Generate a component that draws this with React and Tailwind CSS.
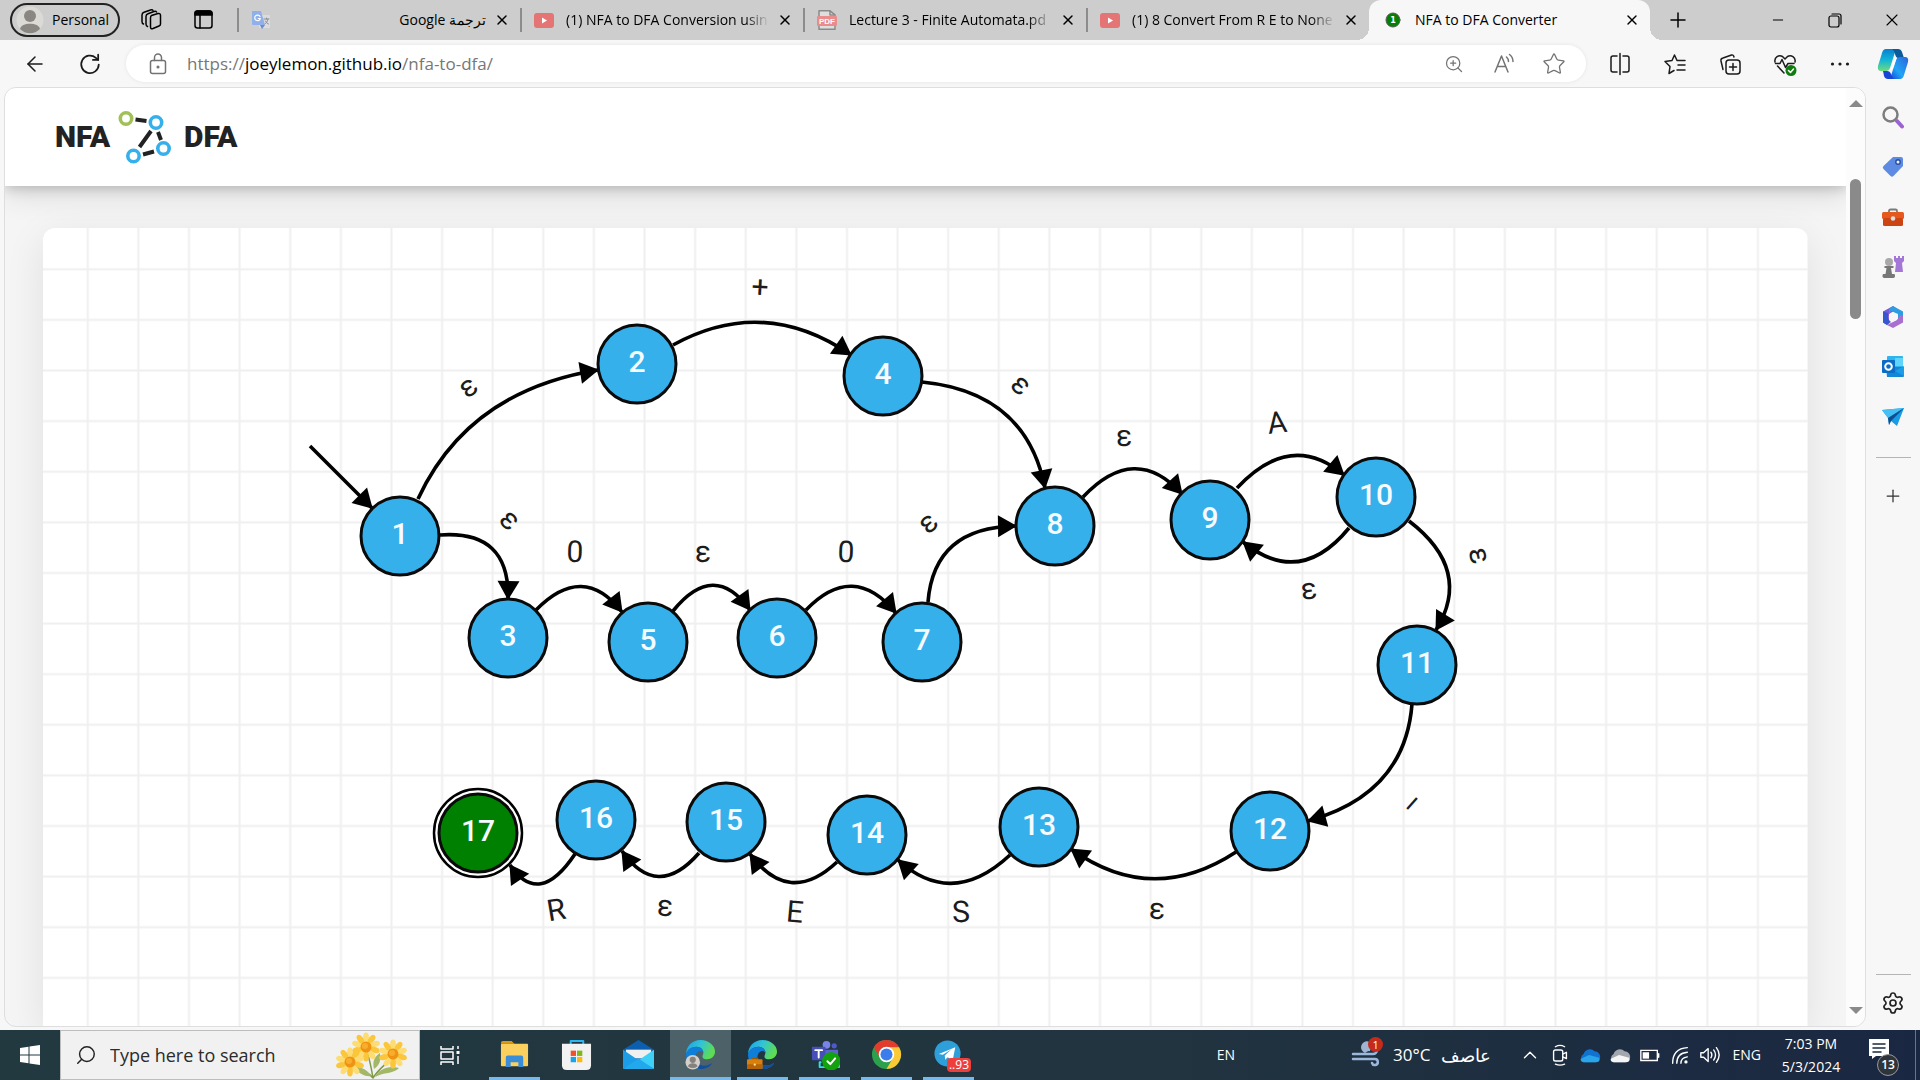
import React from "react";
import {
  ArrowLeft,
  Lock,
  ZoomIn,
  Star,
  X,
  Plus,
  Minus,
  Search,
  Settings,
  ChevronUp,
} from "lucide-react";

const NODES = [
  { id: 1, x: 400, y: 536 },
  { id: 2, x: 637, y: 364 },
  { id: 3, x: 508, y: 638 },
  { id: 4, x: 883, y: 376 },
  { id: 5, x: 648, y: 642 },
  { id: 6, x: 777, y: 638 },
  { id: 7, x: 922, y: 642 },
  { id: 8, x: 1055, y: 526 },
  { id: 9, x: 1210, y: 520 },
  { id: 10, x: 1376, y: 497 },
  { id: 11, x: 1417, y: 665 },
  { id: 12, x: 1270, y: 831 },
  { id: 13, x: 1039, y: 827 },
  { id: 14, x: 867, y: 835 },
  { id: 15, x: 726, y: 822 },
  { id: 16, x: 596, y: 820 },
  { id: 17, x: 478, y: 833, accept: true },
];

/* from, control and to points of each curve, then its label and the label's centre */
const EDGES = [
  { from: [418, 499], ctrl: [468, 391], to: [598, 370], label: "ε", at: [469, 388] },
  { from: [673, 345], ctrl: [764, 295], to: [851, 355], label: "+", at: [760, 287] },
  { from: [922, 382], ctrl: [1026, 392], to: [1045, 488], label: "ε", at: [1020, 386] },
  { from: [440, 535], ctrl: [510, 530], to: [508, 599], label: "ε", at: [509, 521] },
  { from: [536, 610], ctrl: [583, 562], to: [622, 612], label: "0", at: [575, 551] },
  { from: [673, 611], ctrl: [714, 560], to: [750, 610], label: "ε", at: [703, 554] },
  { from: [806, 610], ctrl: [853, 561], to: [896, 613], label: "0", at: [846, 551] },
  { from: [928, 602], ctrl: [934, 527], to: [1016, 526], label: "ε", at: [929, 524] },
  { from: [1083, 497], ctrl: [1135, 442], to: [1182, 494], label: "ε", at: [1124, 438] },
  { from: [1237, 488], ctrl: [1291, 430], to: [1344, 475], label: "A", at: [1277, 422] },
  { from: [1349, 528], ctrl: [1300, 588], to: [1243, 542], label: "ε", at: [1309, 591] },
  { from: [1409, 521], ctrl: [1473, 570], to: [1436, 630], label: "ε", at: [1478, 556] },
  { from: [1412, 704], ctrl: [1405, 794], to: [1308, 821], label: "–", at: [1414, 805] },
  { from: [1236, 852], ctrl: [1152, 907], to: [1071, 849], label: "ε", at: [1157, 911] },
  { from: [1010, 855], ctrl: [952, 909], to: [898, 860], label: "S", at: [961, 911] },
  { from: [837, 862], ctrl: [789, 907], to: [750, 854], label: "E", at: [795, 911] },
  { from: [699, 853], ctrl: [657, 901], to: [622, 851], label: "ε", at: [665, 908] },
  { from: [575, 854], ctrl: [539, 908], to: [510, 865], label: "R", at: [556, 909] },
];

const LABEL_DROP = { "ε": 8, "+": 10, "–": 8 };

function Arrow({ from, ctrl, to }) {
  const angle = (Math.atan2(to[1] - ctrl[1], to[0] - ctrl[0]) * 180) / Math.PI;
  const d = `M${from[0]} ${from[1]} Q${ctrl[0]} ${ctrl[1]} ${to[0]} ${to[1]}`;
  return (
    <g>
      <path d={d} fill="none" stroke="#000" strokeWidth="3.600" strokeDasharray="none" />
      <path d="M1 0 L-18 -11 L-18 11 Z" transform={`translate(${to[0]} ${to[1]}) rotate(${angle})`} />
    </g>
  );
}

function Automaton() {
  return (
    <svg viewBox="43 228 1765 799" preserveAspectRatio="xMinYMin slice" className="block h-full w-full" role="img" aria-label="Automaton with 17 states">
      <defs>
        <pattern id="grid" x="62.5" y="244" width="50.61" height="50.61" patternUnits="userSpaceOnUse">
          <path d="M25.3 0V51M0 25.3H51" stroke="#efefef" strokeWidth="2" />
        </pattern>
      </defs>
      <rect x="43" y="228" width="1765" height="799" fill="url(#grid)" />
      <Arrow from={[310, 446]} ctrl={[341, 477]} to={[372, 508]} />
      {EDGES.map((e, i) => (
        <Arrow key={i} {...e} />
      ))}
      {EDGES.map((e, i) => {
        const tilt = (Math.atan((e.to[1] - e.from[1]) / (e.to[0] - e.from[0])) * 180) / Math.PI;
        return (
          <g key={i} transform={`translate(${e.at[0]} ${e.at[1]}) rotate(${tilt})`}>
            <text y={LABEL_DROP[e.label] ?? 11} textAnchor="middle" className="fill-[#1c1c1c] font-['Roboto',sans-serif] text-[30px]">
              {e.label}
            </text>
          </g>
        );
      })}
      {NODES.map((n) => (
        <g key={n.id}>
          {n.accept && <circle cx={n.x} cy={n.y} r="44" fill="#fff" stroke="#000" strokeWidth="2.500" />}
          <circle cx={n.x} cy={n.y} r="39" fill={n.accept ? "#008000" : "#36b0eb"} stroke="#0a0a0a" strokeWidth="3" />
          <text x={n.x} y={n.y + 8} textAnchor="middle" className="fill-[#f5fbff] font-['Roboto',sans-serif] text-[30px] font-medium">
            {n.id}
          </text>
        </g>
      ))}
    </svg>
  );
}

function Svg({ className = "size-6", box = "0 0 24 24", children }) {
  return (
    <svg viewBox={box} className={className} fill="none" stroke="currentColor" strokeWidth="1.5" strokeLinecap="round" strokeLinejoin="round" aria-hidden="true">
      {children}
    </svg>
  );
}

const YouTube = () => (
  <Svg className="h-4 w-5 shrink-0" box="0 0 20 16">
    <rect width="20" height="15" y="1" rx="3" fill="#e57575" stroke="none" />
    <path d="M8 5.5v6l5-3z" fill="#fff" stroke="none" />
  </Svg>
);
const Pdf = () => (
  <Svg className="h-5 w-5 shrink-0" box="0 0 20 20">
    <path d="M2 .8h11l5 4V19.200H2z" fill="#dedede" stroke="#8a8a8a" />
    <path d="M13 1v4h4" stroke="#8a8a8a" />
    <rect y="6" width="20" height="10" rx="1" fill="#e88c8c" stroke="none" />
    <text x="10" y="14" textAnchor="middle" className="fill-white stroke-none font-['Liberation_Sans',sans-serif] text-[8px] font-bold">PDF</text>
  </Svg>
);
const Translate = () => (
  <Svg className="h-5 w-5 shrink-0" box="0 0 20 20">
    <rect x="8" y="5" width="11" height="13" rx="1" fill="#dcdcdc" stroke="none" />
    <path d="M1 1h9l4 14H2a1 1 0 0 1-1-1z" fill="#8fb0ea" stroke="none" />
    <path d="M9 15h5l-3 4z" fill="#7187d4" stroke="none" />
    <path d="M9 6.500A2.800 2.800 0 1 0 9.300 8.500H7.200" stroke="#fff" strokeWidth="1.200" />
    <path d="M13 9h5M15.500 8v1M17 9c-.5 3-2 4-3 5M14.500 11c1 2 2 2.500 3 3" stroke="#8a8f96" strokeWidth="1" />
  </Svg>
);
const StateDot = () => (
  <Svg className="h-5 w-5 shrink-0" box="0 0 20 20">
    <circle cx="10" cy="10" r="7" fill="#058005" stroke="#5a5a5a" strokeWidth="1" />
    <text x="10" y="13" textAnchor="middle" className="fill-white stroke-none font-['DejaVu_Sans',sans-serif] text-[8px] font-bold">1</text>
  </Svg>
);

const TABS = [
  { title: "ترجمة Google", Icon: Translate, rtl: true },
  { title: "(1) NFA to DFA Conversion usin", Icon: YouTube },
  { title: "Lecture 3 - Finite Automata.pd", Icon: Pdf },
  { title: "(1) 8 Convert From R E to None", Icon: YouTube },
];

function Tab({ title, Icon, rtl }) {
  return (
    <div className="flex h-10 min-w-0 flex-[0_1_283px] items-center">
      <span className="h-6 w-0.5 shrink-0 bg-[#8c8c8c]" />
      <button className="flex min-w-0 flex-1 items-center gap-3 pl-3 text-sm">
        <Icon />
        <span dir={rtl ? "rtl" : "ltr"} className={"min-w-0 flex-1 overflow-hidden whitespace-nowrap text-start " + (rtl ? "" : "[mask-image:linear-gradient(to_right,#000_88%,transparent)]")}>
          {title}
        </span>
      </button>
      <button aria-label={"Close " + title} className="mr-2.5 ml-2 shrink-0">
        <X className="size-4" strokeWidth={2.2} />
      </button>
    </div>
  );
}

function TabStrip() {
  return (
    <header className="flex h-10 bg-[#cdcdcd] text-black">
      <div className="flex w-[237px] shrink-0 items-center pl-2.5">
        <button className="flex h-[34px] w-[110px] items-center gap-2 rounded-full border-2 border-[#222] pl-1 text-sm">
          <Svg className="size-7" box="0 0 28 28">
            <circle cx="14" cy="14" r="13.500" fill="#dcdad6" stroke="none" />
            <circle cx="14" cy="10" r="6" fill="#8a8783" stroke="none" />
            <path d="M4 23c1-7 19-7 20 0a14 14 0 0 1-20 0z" fill="#8a8783" stroke="none" />
          </Svg>
          Personal
        </button>
        <button aria-label="Workspaces" className="ml-[19px]">
          <Svg className="size-6">
            <path d="M12.500 7.500l6.500-2q2.500-.5 2.500 2v8.500q0 1.500-1.500 2l-6 2.500q-2.500.8-2.500-1.500V10q0-2 1-2.500z" />
            <path d="M8.500 18.500C7 18 7 17 7 16V8.500q0-2 2-2.700L15 3.500q2-.5 2.500.5" />
            <path d="M4.500 16C3 15.500 3 14.500 3 13.500V7q0-2 2-2.700L11.500 2q2-.5 2.500.5" />
          </Svg>
        </button>
        <button aria-label="Tab actions" className="ml-7">
          <Svg className="size-6">
            <rect x="4" y="3" width="17" height="17" rx="2.500" />
            <path d="M4 7V5.500A2.500 2.500 0 0 1 6.500 3h12A2.500 2.500 0 0 1 21 5.500V7z" fill="currentColor" />
            <path d="M9 7v13" />
          </Svg>
        </button>
      </div>
      {TABS.map((t) => (
        <Tab key={t.title} {...t} />
      ))}
      <div className="relative flex min-w-0 flex-[0_1_281px] items-center rounded-t-xl bg-[#f7f7f7]">
        <span className="absolute bottom-0 -left-3 size-3 bg-[radial-gradient(circle_at_top_left,transparent_12px,#f7f7f7_12px)]" />
        <span className="absolute -right-3 bottom-0 size-3 bg-[radial-gradient(circle_at_top_right,transparent_12px,#f7f7f7_12px)]" />
        <button className="flex min-w-0 flex-1 items-center gap-3 pl-3.5 text-sm">
          <StateDot />
          NFA to DFA Converter
        </button>
        <button aria-label="Close NFA to DFA Converter" className="mr-2.5">
          <X className="size-4" strokeWidth={2} />
        </button>
      </div>
      <button aria-label="New tab" className="ml-4">
        <Plus className="size-6" strokeWidth={1.5} />
      </button>
      <div className="ml-auto flex">
        <button aria-label="Minimize" className="grid w-[57px] place-items-center"><Minus className="size-4" strokeWidth={1.5} /></button>
        <button aria-label="Restore" className="grid w-[57px] place-items-center">
          <Svg className="size-4" box="0 0 16 16">
            <rect x="2" y="4" width="10" height="11" rx="2" strokeWidth="1.200" />
            <path d="M5 2h7q2 0 2 2v8" strokeWidth="1.200" />
          </Svg>
        </button>
        <button aria-label="Close window" className="grid w-[57px] place-items-center"><X className="size-5" strokeWidth={1.3} /></button>
      </div>
    </header>
  );
}

function Toolbar() {
  return (
    <nav className="flex h-[47px] items-center pl-[19px] text-[#1b1b1b]">
      <button aria-label="Back" className="grid size-8 place-items-center"><ArrowLeft className="size-6" strokeWidth={1.5} /></button>
      <button aria-label="Refresh" className="ml-[23px] grid size-8 place-items-center">
        <Svg className="size-7">
          <path d="M19.500 12.500A7.500 7.500 0 1 1 17 6.700L19 8.500" />
          <path d="M19 4v4.500h-4.500" />
        </Svg>
      </button>
      <div className="ml-5 flex h-[37px] min-w-0 flex-1 items-center rounded-full bg-white pr-5 pl-5 text-[#737373] shadow-[0_0_4px_rgba(0,0,0,0.08)]">
        <Svg className="size-6">
          <rect x="4.500" y="8.500" width="15" height="13" rx="2" />
          <path d="M8.500 8.500V5.500a3.500 3.500 0 0 1 7 0v3" />
          <circle cx="12" cy="15" r=".8" fill="currentColor" />
        </Svg>
        <a href="https://joeylemon.github.io/nfa-to-dfa/" className="ml-[17px] text-[17px] leading-6 text-[#777]">
          https://<span className="text-black">joeylemon.github.io</span>/nfa-to-dfa/
        </a>
        <div className="ml-auto flex items-center gap-[26px]">
          <button aria-label="Zoom" className="mr-0.5"><ZoomIn className="size-5" strokeWidth={1.5} /></button>
          <button aria-label="Read aloud">
            <Svg className="size-6">
              <path d="M3 20L9.500 4 16 20M5.500 14.500h8" />
              <path d="M14.500 5a6 6 0 0 1 2 4.500M17.500 2.500a9 9 0 0 1 3.500 7" />
            </Svg>
          </button>
          <button aria-label="Add to favorites"><Star className="size-6" strokeWidth={1.3} /></button>
        </div>
      </div>
      <div className="flex items-center gap-[31px] pl-[22px]">
        <button aria-label="Split screen">
          <Svg>
            <path d="M9 4H5a2 2 0 0 0-2 2v12a2 2 0 0 0 2 2h4M15 4h4a2 2 0 0 1 2 2v12a2 2 0 0 1-2 2h-4M12 1.500v21" />
          </Svg>
        </button>
        <button aria-label="Favorites">
          <Svg>
            <path d="M14 8.500L11.500 3 9 8.500l-7 1 5 5L6 21.500l5-3M14 8.500h8M15 13h7M14 18h8" />
          </Svg>
        </button>
        <button aria-label="Collections">
          <Svg>
            <rect x="8" y="8" width="14" height="14" rx="3" />
            <path d="M15 11.500v7M11.500 15h7M5 17.500l-2-8.500q-.5-2.500 2-3l8.500-3q2-.5 2.500 2" />
          </Svg>
        </button>
        <button aria-label="Browser essentials">
          <Svg>
            <path d="M2 10C1 5 6 2.500 9.500 4.500L12 7l2.500-2.500C18 2.500 23 5 22 10M4.500 14L11 21M2.500 11.500H7l2-4 3.500 8 2.500-4h6" />
            <circle cx="18" cy="18.500" r="5.500" fill="#107c10" stroke="none" />
            <path d="M15.500 18.500l2 2 3-3.500" stroke="#fff" />
          </Svg>
        </button>
        <button aria-label="Settings and more">
          <Svg>
            <g fill="currentColor" stroke="none">
              <circle cx="4.500" cy="12" r="1.600" />
              <circle cx="12" cy="12" r="1.600" />
              <circle cx="19.500" cy="12" r="1.600" />
            </g>
          </Svg>
        </button>
      </div>
      <button aria-label="Copilot" className="grid w-[68px] place-items-center pl-3.5">
        <Svg className="size-8" box="0 0 32 32">
          <defs>
            <linearGradient id="cpA" x1="0" y1="0" x2="0" y2="1"><stop stopColor="#0a7fd0" /><stop offset=".5" stopColor="#12b5d8" /><stop offset="1" stopColor="#6fdb7c" /></linearGradient>
            <linearGradient id="cpB" x1="0" y1="1" x2="1" y2="0"><stop stopColor="#1746d8" /><stop offset=".4" stopColor="#1fa6f5" /><stop offset="1" stopColor="#2f62dc" /></linearGradient>
          </defs>
          <g stroke="none">
            <path d="M9 1h10l-6 19q-1 3-4 3H4q-4 0-3-5L5 5q1-4 4-4z" fill="url(#cpA)" />
            <path d="M15 1h6q3 0 4 3l2 6h-6q-2 0-3-4-1-4-3-5z" fill="#0b5a9c" />
            <path d="M23 31H13l6-19q1-3 4-3h5q4 0 3 5l-4 13q-1 4-4 4z" fill="url(#cpB)" />
            <path d="M17 31h-6q-3 0-4-3l-1-5h4q3 0 4 3 1 4 3 5z" fill="#1746d8" />
            <path d="M13 22l4-11q1-2 3-2h-2q2 0 1 3l-3 8q-1 2-3 2z" fill="#fff" />
          </g>
        </Svg>
      </button>
    </nav>
  );
}

function Logo() {
  return (
    <a href="#top" aria-label="NFA to DFA" className="flex items-center gap-2 font-['Roboto','Liberation_Sans',sans-serif] text-[30px] leading-none font-black text-[#222]">
      NFA
      <svg viewBox="0 0 54 54" className="size-[54px]" fill="none" strokeWidth="4" aria-hidden="true">
        <path d="M17.500 9.500l11 1.500M33 21L21.500 37M40 22l3 8M25 44.500l11-3" stroke="#222" />
        <g stroke="#36b0eb" strokeWidth="3.600">
          <circle cx="38" cy="12.500" r="5.700" />
          <circle cx="45.500" cy="38.500" r="5.700" />
          <circle cx="15.500" cy="46" r="5.700" />
        </g>
        <circle cx="8" cy="8.500" r="5.700" stroke="#a1c057" strokeWidth="3.600" />
      </svg>
      <span className="ml-1">DFA</span>
    </a>
  );
}

const SIDE = [
  ["Search", (
    <g>
      <circle cx="9.500" cy="9.500" r="7" stroke="#7d7d7d" strokeWidth="2.500" />
      <path d="M16 16l5 5.500" stroke="#9a63cf" strokeWidth="4" />
    </g>
  )],
  ["Shopping", (
    <g stroke="none">
      <path d="M12 2h8q2 0 2 2v7L12.500 21q-1.500 1.500-3 0L2.500 14q-1.500-1.500 0-3z" fill="#5d8be3" />
      <circle cx="17" cy="7" r="2.200" fill="#e8f0ff" stroke="#2c4d9c" strokeWidth="1.400" />
    </g>
  )],
  ["Tools", (
    <g stroke="none">
      <path d="M8 8V6q0-1.500 1.500-1.500h5Q16 4.500 16 6v2" stroke="#7a7a7a" strokeWidth="1.800" />
      <rect x="1" y="7" width="22" height="7" rx="1.500" fill="#e5591c" />
      <rect x="2" y="13" width="20" height="8" rx="1.500" fill="#cc4411" />
      <circle cx="12" cy="13.500" r="2.300" fill="#dedede" />
    </g>
  )],
  ["Games", (
    <g stroke="none">
      <path d="M13 1h2v2h2V1h2v2h2V1h2v5l-2 2 1 9h-8l1-9-2-2z" fill="#a277d6" />
      <circle cx="8" cy="7" r="4" fill="#a8a8a8" />
      <path d="M3.500 11h9v2H10l1 6h2.500q1.500 3-1 4H3q-2.500-1-1-4h2.500l1-6h-2z" fill="#777" />
    </g>
  )],
  ["Microsoft 365", (
    <g stroke="none">
      <path d="M12 1L2 6.500v11l4 2.500 4-3-2-2V9l8-5z" fill="#7c5cd6" />
      <path d="M12 1l10 5.500V17l-5-2V9l-7-3-2 3V4z" fill="#2f9be0" />
      <path d="M22 13v4.500L12 23l-6-3 10-5 3-5 3 1z" fill="#a86fd0" />
      <path d="M2 6.500v11l4 2.500 3-3-2-3V8z" fill="#3558cf" />
      <circle cx="12" cy="12" r="4.200" fill="#f7f7f7" />
    </g>
  )],
  ["Outlook", (
    <g stroke="none">
      <rect x="6" y="1" width="16" height="14" rx="1" fill="#2fb4ee" />
      <rect x="14" y="3" width="8" height="8" fill="#5fd5fb" />
      <path d="M5 12h18v9q0 1-1 1H6z" fill="#1287d6" />
      <path d="M23 11v10L14 16z" fill="#1b9de8" />
      <rect x="1" y="5" width="13" height="13" rx="1" fill="#0a6cc4" />
      <circle cx="7.500" cy="11.500" r="3.300" stroke="#fff" strokeWidth="2" />
    </g>
  )],
  ["Drop", (
    <g stroke="none">
      <path d="M1 5l22-2-7 18-6-5-2 4-1-7z" fill="#1a9be6" />
      <path d="M1 5l22-2L7 13z" fill="#45c0f5" />
      <path d="M7 13L23 3 10 16l-2 4z" fill="#0f4f8f" />
    </g>
  )],
];

function Sidebar() {
  return (
    <aside className="flex w-[54px] shrink-0 flex-col items-center pt-[18px] pb-3">
      <div className="flex flex-col gap-[26px]">
        {SIDE.map(([name, art]) => (
          <button key={name} aria-label={name}><Svg className="size-6">{art}</Svg></button>
        ))}
      </div>
      <span className="mt-7 h-px w-[35px] bg-[#b5b5b5]" />
      <button aria-label="Customize" className="mt-7 text-[#333]"><Plus className="size-5" strokeWidth={1.5} /></button>
      <span className="mt-auto h-px w-[35px] bg-[#b5b5b5]" />
      <button aria-label="Sidebar settings" className="mt-4 text-[#222]"><Settings className="size-6" strokeWidth={1.7} /></button>
    </aside>
  );
}

function Page() {
  return (
    <div className="flex min-w-0 flex-1 overflow-hidden rounded-xl border border-[#dedede] bg-[#f5f5f5]">
      <div className="flex min-w-0 flex-1 flex-col overflow-hidden">
        <div className="relative z-10 flex h-[98px] shrink-0 items-center bg-white pl-[50px] shadow-[0_8px_28px_rgba(0,0,0,0.12),0_2px_12px_rgba(0,0,0,0.2)]">
          <Logo />
        </div>
        <main className="min-h-0 flex-1 pt-[42px] pr-[38px] pl-[38px]">
          <div className="h-full overflow-hidden rounded-t-xl bg-white shadow-[0_10px_40px_rgba(0,0,0,0.09)]">
            <Automaton />
          </div>
        </main>
      </div>
      <div className="flex w-[19px] shrink-0 flex-col items-center bg-[#fcfcfc] pt-3 pb-3">
        <Svg className="h-[7px] w-3.5" box="0 0 14 7"><path d="M7 0l7 7H0z" fill="#8a8a8a" stroke="none" /></Svg>
        <span className="mt-[72px] h-[140px] w-[11px] rounded-full bg-[#8a8a8a]" />
        <Svg className="mt-auto h-[7px] w-3.5" box="0 0 14 7"><path d="M7 7l7-7H0z" fill="#8a8a8a" stroke="none" /></Svg>
      </div>
    </div>
  );
}

const PETALS = [0, 36, 72, 108, 144, 180, 216, 252, 288, 324];
function Daisy({ x, y }) {
  return (
    <g transform={`translate(${x} ${y})`} stroke="none">
      {PETALS.map((a) => (
        <ellipse key={a} cx="0" cy="-9.500" rx="2.900" ry="5" fill={a % 72 ? "#fbc63a" : "#fddc74"} transform={`rotate(${a})`} />
      ))}
      <circle r="5.500" fill="#ee9412" />
      <circle r="3" cx="-1" cy="-1" fill="#f8ae2c" />
    </g>
  );
}

function EdgeArt() {
  return (
    <g stroke="none">
      <path d="M16 1c9 0 15 6 15 12 0 5-4 8-8 8-3 0-5-1-5-3 0-1 1-2 1-4 0-3-3-6-7-6-6 0-10 4-11 8C1 8 7 1 16 1z" fill="url(#edgeTop)" />
      <path d="M1 16c1-5 5-8 11-8 4 0 7 3 7 6-2-3-7-2-8 3-1 7 5 12 12 10 2-.5 4-2 5-2-2 4-7 6-12 6C7 31 1 24 1 16z" fill="#0f7ed8" />
      <path d="M11 17c-1 7 5 12 12 10 2-.5 4-2 5-2-2 4-7 6-12 6-6-1-9-8-5-14z" fill="#174d96" />
    </g>
  );
}

const APPS = [
  { name: "File Explorer", state: "open", art: (
    <g stroke="none">
      <path d="M2 4q0-2 2-2h9l3 3H2z" fill="#d99a12" />
      <rect x="2" y="5" width="28" height="23" rx="1" fill="#fcd05e" />
      <path d="M7 29V19q0-2 2-2h14q2 0 2 2v10h-5v-5h-8v5z" fill="#3a8ed8" />
    </g>
  ) },
  { name: "Microsoft Store", state: "", art: (
    <g stroke="none">
      <path d="M10 7V2h13v5" stroke="#2cb7f1" strokeWidth="2" />
      <path d="M1 5h30v22q0 5-5 5H6q-5 0-5-5z" fill="#f2f2f2" />
      <path d="M10 12h5.500v5.500H10z" fill="#f0502a" />
      <path d="M16.500 12H22v5.500h-5.500z" fill="#80b81a" />
      <path d="M10 18.500h5.500V24H10z" fill="#16a4ee" />
      <path d="M16.500 18.500H22V24h-5.500z" fill="#fcb90e" />
    </g>
  ) },
  { name: "Mail", state: "", art: (
    <g stroke="none">
      <path d="M0 11L16 1l16 10v19H0z" fill="#0b5fae" />
      <path d="M3 11h26v9H3z" fill="#f0f0f0" />
      <path d="M0 11l16 11-16 9z" fill="#1c9de8" />
      <path d="M32 11L16 22l16 9z" fill="#3fd0f8" />
      <path d="M0 31l16-11 16 11z" fill="#22a8ec" />
    </g>
  ) },
  { name: "Edge Personal", state: "active", art: (
    <g>
      <EdgeArt />
      <g stroke="none">
        <circle cx="8" cy="24" r="7.500" fill="#d3d0cc" />
        <circle cx="8" cy="21.500" r="3.200" fill="#85827e" />
        <path d="M3 28c1-4 9-4 10 0q-5 4-10 0z" fill="#85827e" />
      </g>
    </g>
  ) },
  { name: "Edge Work", state: "open", art: (
    <g>
      <EdgeArt />
      <g stroke="none">
        <path d="M5 22v-2h6v2" stroke="#9a5a05" strokeWidth="1.500" />
        <rect y="21" width="16" height="10" rx="1" fill="#d97f0c" />
        <rect y="26" width="16" height="5" rx="1" fill="#b5640a" />
        <circle cx="8" cy="26.500" r="1.200" fill="#ffe28a" />
      </g>
    </g>
  ) },
  { name: "Teams", state: "open", art: (
    <g stroke="none">
      <circle cx="18" cy="6" r="4" fill="#7b83eb" />
      <circle cx="26" cy="7" r="2.700" fill="#5059c9" />
      <path d="M12 11h18v8q-2 7-9 7-8 0-9-7z" fill="#5b62cf" />
      <path d="M12 24h-1v5h20v-4" stroke="#2ce0e0" strokeWidth="2" />
      <rect x="3" y="8" width="14" height="14" rx="1" fill="#464eb8" />
      <path d="M6.500 11.500h7M10 11.500V19" stroke="#fff" strokeWidth="2" />
      <circle cx="23" cy="23" r="9.500" fill="#13a10e" />
      <path d="M19 23l3 3 5-6" stroke="#fff" strokeWidth="2" />
    </g>
  ) },
  { name: "Chrome", state: "open", art: (
    <g stroke="none">
      <circle cx="16" cy="16" r="15" fill="#2da04c" />
      <path d="M3 8.500A15 15 0 0 1 29 8.500L16 9 9.500 19.800z" fill="#e33b2e" />
      <path d="M29 8.500A15 15 0 0 1 16 31l6.500-11.200L16 8.500z" fill="#fcc934" />
      <circle cx="16" cy="16" r="8" fill="#fff" />
      <circle cx="16" cy="16" r="6.200" fill="#3b7ded" />
    </g>
  ) },
  { name: "Telegram", state: "open", badge: "..93", art: (
    <g stroke="none">
      <circle cx="15" cy="15" r="13.500" fill="#2f9fda" />
      <path d="M6 15.500L23 8.500l-2.800 14-5-3.700-2.600 2.500-.5-4.300 7-6.500-9 5.700z" fill="#fff" />
    </g>
  ) },
];

function Taskbar() {
  return (
    <footer className="flex h-[50px] shrink-0 items-stretch bg-linear-to-r from-[#223940] via-[#21343f] via-60% to-[#1a2742] text-white">
      <button aria-label="Start" className="grid w-[60px] place-items-center">
        <Svg className="size-5" box="0 0 20 20">
          <path d="M0 3l8.500-1.200v7.700H0zM9.500 1.600L20 0v9.500H9.500zM0 10.500h8.500v7.700L0 17zM9.500 10.500H20V20L9.500 18.400z" fill="#fff" stroke="none" />
        </Svg>
      </button>
      <label className="flex w-[360px] items-center border border-[#bdbdbd] bg-[#f1f1f1] pl-3.5 text-[#222]">
        <Search className="size-[22px] -scale-x-100" strokeWidth={1.6} />
        <input type="text" aria-label="Search" placeholder="Type here to search" className="ml-[13px] min-w-0 flex-1 bg-transparent text-lg outline-none placeholder:text-[#2b2b2b]" />
        <Svg className="mr-2 h-12 w-[78px] shrink-0" box="0 0 78 48">
          <g stroke="none">
            <path d="M40 47c-2-12-3-18-6-26M40 47c6-10 14-14 20-22M40 47C32 38 24 36 18 34" stroke="#7d9b45" strokeWidth="1.500" />
            <path d="M41 38c-2-8 1-13 6-16 1 7 0 12-6 16zM42 46c4-8 14-12 24-9-6 6-15 4-24 9zM38 45c-5 1-12-2-16-8 8-1 12 2 16 8z" fill="#a3b867" />
          </g>
          <Daisy x="33" y="16" />
          <Daisy x="17" y="31" />
          <Daisy x="60" y="23" />
        </Svg>
      </label>
      <button aria-label="Task view" className="grid w-[60px] place-items-center">
        <Svg className="size-5" box="0 0 20 20">
          <path d="M1 1v3h12V1M1 7h12v7H1zM1 20v-3h12v3M18 1v3M18 11v8" strokeLinecap="butt" />
          <path d="M16.500 6h3v3h-3z" fill="#fff" stroke="none" />
        </Svg>
      </button>
      <svg className="absolute size-0" aria-hidden="true">
        <linearGradient id="edgeTop" x1="0" y1="0" x2="1" y2=".4"><stop stopColor="#1b9de2" /><stop offset=".5" stopColor="#30c4d8" /><stop offset="1" stopColor="#5fdc52" /></linearGradient>
      </svg>
      <div className="flex gap-px pl-1">
        {APPS.map((a) => (
          <button key={a.name} aria-label={a.name} className={"relative flex w-[61px] flex-col items-center pt-[9px] " + (a.state === "active" ? "bg-[#4d6168]" : "")}>
            <Svg className="size-[31px]" box="0 0 32 32">{a.art}</Svg>
            {a.badge && <span className="absolute right-2 bottom-2 rounded bg-[#ee3f3c] px-0.5 text-xs leading-[14px]">{a.badge}</span>}
            {a.state && <span className={"mt-auto h-[3px] bg-[#76b9ed] " + (a.state === "active" ? "w-full" : "w-[51px]")} />}
          </button>
        ))}
      </div>
      <div className="ml-auto flex items-center">
        <button className="mr-[116px] text-sm">EN</button>
        <button className="flex items-center gap-2.5 text-[17px]" dir="ltr">
          <span className="relative">
            <Svg className="size-8" box="0 0 32 32">
              <path d="M14 14a6 6 0 1 1 8-5" fill="#9fb4cf" stroke="none" />
              <path d="M2 15h20M2 20h22a3 3 0 1 1-3 4M4 15h18a4 4 0 1 0-4-4" stroke="#9bb8dc" strokeWidth="2.500" />
            </Svg>
            <span className="absolute -top-0.5 right-0 grid size-[15px] place-items-center rounded-full bg-[#c42b1c] text-[11px] leading-none">1</span>
          </span>
          <span>30°C</span>
          <span className="text-lg" dir="rtl" lang="ar">عاصف</span>
        </button>
        <div className="ml-7 flex items-center gap-2">
          <button aria-label="Show hidden icons"><ChevronUp className="size-[22px]" strokeWidth={1.5} /></button>
          <Svg className="size-[22px]">
            <rect x="5" y="6.500" width="10" height="12" rx="2" /><path d="M15 11l4-2v7l-4-2M7 3q5-3 10 0M7 22q5 2 10 0" />
          </Svg>
          <Svg className="size-[22px]">
            <path d="M5 20a5 5 0 0 1 0-9 7 7 0 0 1 12-3 6 6 0 0 1 6 7q0 5-5 5z" fill="#1173cf" stroke="none" />
            <path d="M5 20q-4-1-3-4l9-4 11 3q1 5-4 5z" fill="#2aa5ec" stroke="none" />
          </Svg>
          <Svg className="size-[22px]">
            <path d="M5 20a5 5 0 0 1 0-9 7 7 0 0 1 12-3 6 6 0 0 1 6 7q0 5-5 5z" fill="#a2a6ad" stroke="none" />
            <path d="M5 20q-4-1-3-4l9-4 11 3q1 5-4 5z" fill="#f5f5f5" stroke="none" />
          </Svg>
          <Svg className="size-[22px]">
            <path d="M2 7h18v11H2zM21.500 10.500v4" strokeLinejoin="miter" /><path d="M4 9h7v7H4z" fill="#fff" stroke="none" />
          </Svg>
          <Svg className="size-[22px]">
            <path d="M4 21Q4 5 20 4M8.500 21Q8.500 10 20 9M13 21Q13 15 20 14" />
            <circle cx="18.500" cy="19.500" r="1.800" fill="#fff" stroke="none" />
          </Svg>
          <Svg className="size-[22px]">
            <path d="M2 9.500v5h3l5 4.500V5L5 9.500zM13 9q2 3 0 6M16 6.500q4 5.500 0 11M19 4q6 8 0 16" />
          </Svg>
          <button className="ml-1 text-sm">ENG</button>
        </div>
        <button className="ml-4 w-[68px] text-center text-sm leading-[23px]">
          <span className="block">7:03 PM</span>
          <span className="block">5/3/2024</span>
        </button>
        <button aria-label="13 notifications" className="relative ml-[22px] h-10 w-9">
          <Svg className="mb-3 ml-0.5 size-5" box="0 0 20 20">
            <path d="M0 0h20v17H7l-4 3v-3H0z" fill="#fff" stroke="none" />
            <path d="M4 5h12M4 9h12M4 13h8" stroke="#1b2a40" />
          </Svg>
          <span className="absolute top-[19px] left-2.5 grid size-[22px] place-items-center rounded-full border border-[#9a9a9a] bg-[#2f343b] text-xs font-semibold leading-none">13</span>
        </button>
        <span className="mr-1 ml-3 h-[50px] w-px bg-[#6a7486]" />
      </div>
    </footer>
  );
}

export default function App() {
  return (
    <div className="flex h-screen flex-col overflow-hidden bg-[#f7f7f7] font-['Open_Sans','Noto_Sans',sans-serif]">
      <TabStrip />
      <Toolbar />
      <div className="flex min-h-0 flex-1 pb-[3px] pl-1">
        <Page />
        <Sidebar />
      </div>
      <Taskbar />
    </div>
  );
}
